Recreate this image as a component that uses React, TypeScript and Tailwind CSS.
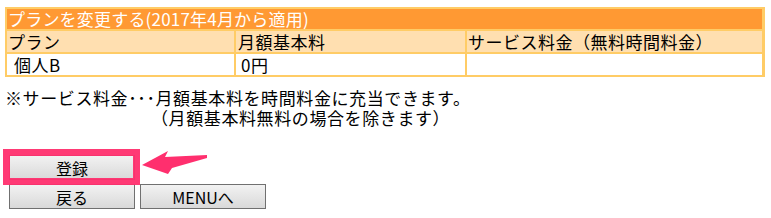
import React from "react";

const font = { fontFamily: '"Noto Sans CJK JP", "Noto Sans", sans-serif' };

function Btn({ children }: { children: React.ReactNode }) {
  return (
    <button className="w-[126px] h-[25px] border border-[#707070] bg-gradient-to-b from-[#f2f2f2] to-[#d9d9d9] text-[16px] leading-[20px] text-black flex items-center justify-center">
      {children}
    </button>
  );
}

export default function App() {
  return (
    <div className="w-[771px] h-[218px] bg-white text-black relative overflow-hidden" style={font}>
      <div className="pt-[7px] pl-[5px]">
        <div className="w-[760px] bg-[#ffcc66] p-[2px] grid grid-cols-[227px_229px_295px] gap-[2px] text-[17px] leading-[20px] tracking-[0.5px]">
          <div className="col-span-3 bg-[#ff9933] text-white h-[20px] pl-[1px] flex items-center tracking-[0.2px]">
            プランを変更する(2017年4月から適用)
          </div>
          <div className="bg-[#ffdfb0] h-[21px] flex items-center pl-[1px]">プラン</div>
          <div className="bg-[#ffdfb0] h-[21px] flex items-center pl-[2px]">月額基本料</div>
          <div className="bg-[#ffdfb0] h-[21px] flex items-center pl-[1px]">サービス料金（無料時間料金）</div>
          <div className="bg-white h-[21px] flex items-center pl-[7px]">個人B</div>
          <div className="bg-white h-[21px] flex items-center pl-[5px]">0円</div>
          <div className="bg-white h-[21px]"></div>
        </div>
      </div>
      <div className="mt-[11px] pl-[5px] text-[17px] leading-[20px] tracking-[0.6px]">
        <div>※サービス料金･･･月額基本料を時間料金に充当できます。</div>
        <div className="pl-[146px]">（月額基本料無料の場合を除きます）</div>
      </div>
      <div className="mt-[27px] pl-[9px] flex flex-col gap-[4px]">
        <div className="relative w-[126px]">
          <Btn>登録</Btn>
          <div className="absolute left-[-6px] top-[-6px] w-[137px] h-[36px] border-[7px] border-[#ff2f6e] opacity-95"></div>
          <svg className="absolute left-[124px] top-[-4px]" width="80" height="30" viewBox="133 151 80 30">
            <polygon points="142,165 168,151 165,157 207,155 207,158 172,168 168,174" fill="#ff2f6e" />
          </svg>
        </div>
        <div className="flex gap-[5px]">
          <Btn>戻る</Btn>
          <Btn>MENUへ</Btn>
        </div>
      </div>
    </div>
  );
}
